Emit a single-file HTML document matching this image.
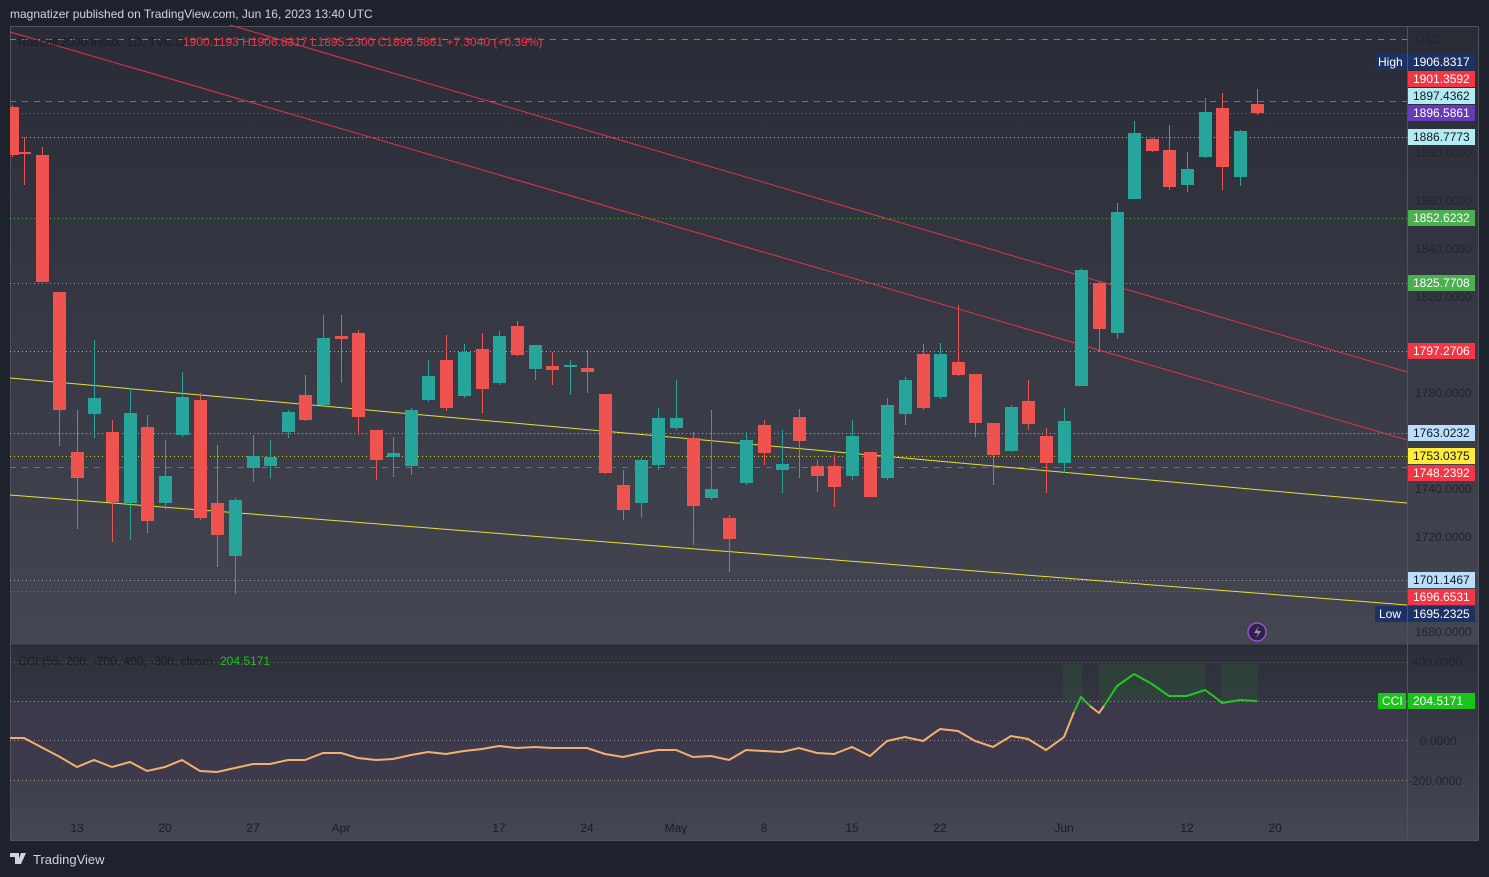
<!DOCTYPE html>
<html><head><meta charset="utf-8"><style>
body{margin:0;width:1489px;height:877px;background:#1e222d;overflow:hidden;font-family:"Liberation Sans",sans-serif}
.t{position:absolute;left:10px;top:7px;color:#d1d4dc;font-size:12px}
</style></head><body>
<div class="t">magnatizer published on TradingView.com, Jun 16, 2023 13:40 UTC</div>
<svg width="1489" height="877" style="position:absolute;left:0;top:0" xmlns="http://www.w3.org/2000/svg" font-family="Liberation Sans, sans-serif">
<defs>
<linearGradient id="g" x1="0" y1="0" x2="0" y2="1"><stop offset="0" stop-color="#292c36"/><stop offset="1" stop-color="#444652"/></linearGradient>
<linearGradient id="g2" x1="0" y1="0" x2="0" y2="1"><stop offset="0" stop-color="#2c2f3a"/><stop offset="1" stop-color="#454752"/></linearGradient>
<clipPath id="cp"><rect x="10" y="26" width="1397" height="619"/></clipPath>
</defs>
<rect x="10" y="26" width="1469" height="619" fill="url(#g)"/>
<rect x="10" y="646" width="1469" height="195" fill="url(#g2)"/>
<rect x="10" y="701" width="1397" height="79" fill="#3f3a4d" opacity="0.8"/>
<line x1="10" y1="645.5" x2="1479" y2="645.5" stroke="#2a2d37" stroke-width="2"/>
<line x1="1407.5" y1="26" x2="1407.5" y2="841" stroke="#50535e"/>
<rect x="10.5" y="26.5" width="1468" height="814" fill="none" stroke="#50535e"/>
<g stroke-width="1">
<line x1="10" y1="39.5" x2="1407" y2="39.5" stroke="#6b8a6e" stroke-dasharray="6,6"/>
<line x1="10" y1="101.5" x2="1407" y2="101.5" stroke="#f23645" stroke-dasharray="6,6"/>
<line x1="10" y1="113.5" x2="1407" y2="113.5" stroke="#7e57c2" stroke-dasharray="1,3"/>
<line x1="10" y1="137.5" x2="1407" y2="137.5" stroke="#a0c8c8" stroke-dasharray="1,3"/>
<line x1="10" y1="218.5" x2="1407" y2="218.5" stroke="#4caf50" stroke-dasharray="1,3"/>
<line x1="10" y1="283.5" x2="1407" y2="283.5" stroke="#8a9" stroke-dasharray="1,3"/>
<line x1="10" y1="351.5" x2="1407" y2="351.5" stroke="#aaa" stroke-dasharray="1,3"/>
<line x1="10" y1="433.5" x2="1407" y2="433.5" stroke="#aab" stroke-dasharray="1,3"/>
<line x1="10" y1="456.5" x2="1407" y2="456.5" stroke="#d4c23a" stroke-dasharray="1,3"/>
<line x1="10" y1="467.5" x2="1407" y2="467.5" stroke="#f23645" stroke-dasharray="6,6"/>
<line x1="10" y1="580.5" x2="1407" y2="580.5" stroke="#aab" stroke-dasharray="1,3"/>
<line x1="10" y1="591.5" x2="1407" y2="591.5" stroke="#c44" stroke-dasharray="1,3"/>
<line x1="10" y1="662.5" x2="1407" y2="662.5" stroke="#666" stroke-dasharray="1,3"/>
<line x1="10" y1="701.5" x2="1407" y2="701.5" stroke="#999" stroke-dasharray="1,3"/>
<line x1="10" y1="740.5" x2="1407" y2="740.5" stroke="#999" stroke-dasharray="1,3"/>
<line x1="10" y1="780.5" x2="1407" y2="780.5" stroke="#999" stroke-dasharray="1,3"/>
</g>
<line x1="10" y1="32" x2="1407" y2="440" stroke="#e03545" stroke-width="1"/>
<line x1="230" y1="25" x2="1407" y2="372" stroke="#e03545" stroke-width="1"/>
<line x1="10" y1="378" x2="1407" y2="503" stroke="#e8e030" stroke-width="1"/>
<line x1="10" y1="495" x2="1407" y2="605" stroke="#e8e030" stroke-width="1"/>
<g id="candles" clip-path="url(#cp)"></g>
<text x="18" y="46" font-size="12" fill="#1a1d26">Russell 2000 Index, 1D, TVC  O</text>
<text x="183" y="46" font-size="12" fill="#f23645">1900.1193  H1906.8317  L1895.2300  C1896.5861  +7.3040 (+0.39%)</text>
<text x="18" y="665" font-size="12" fill="#1a1d26">CCI (55, 200, -200, 400, -300, close)</text>
<text x="220" y="665" font-size="12" fill="#1bc41b">204.5171</text>
<rect x="1063" y="664" width="19" height="37" fill="#2f4a3a" opacity="0.6"/>
<rect x="1099" y="664" width="106" height="37" fill="#2f4a3a" opacity="0.6"/>
<rect x="1221" y="664" width="37" height="37" fill="#2f4a3a" opacity="0.6"/>
<polyline fill="none" stroke="#f5b06e" stroke-width="2" points="10,738 24,738 60,757 77,767 94,760 112,767 130,762 147,771 165,767 182,760 200,771 217,772 235,768 253,764 270,764 288,760 305,760 323,753 341,753 358,758 376,760 393,759 411,755 428,752 446,754 464,751 482,749 499,746 517,748 535,747 552,748 570,748 587,748 605,754 623,757 641,753 658,750 676,750 693,757 711,756 729,760 746,750 764,751 782,752 799,748 817,753 834,754 852,747 870,756 887,741 905,737 923,741 940,729 958,731 975,741 993,747 1011,736 1028,739 1046,750 1064,737 1074,712"/>
<polyline fill="none" stroke="#f5b06e" stroke-width="2" points="1090,706 1099,713 1104,706"/>
<polyline fill="none" stroke="#22c722" stroke-width="2" points="1074,712 1081,697 1090,706"/>
<polyline fill="none" stroke="#22c722" stroke-width="2" points="1104,706 1117,686 1134,674 1152,684 1169,696 1187,696 1205,690 1220,701 1222,703 1240,700 1257,701"/>
<g font-size="12" fill="#22252e">
<text x="1416" y="44">USD</text>
<text x="1415" y="157">1880.0000</text>
<text x="1415" y="205">1860.0000</text>
<text x="1415" y="253">1840.0000</text>
<text x="1415" y="301">1820.0000</text>
<text x="1415" y="397">1780.0000</text>
<text x="1415" y="493">1740.0000</text>
<text x="1415" y="541">1720.0000</text>
<text x="1415" y="636">1680.0000</text>
<text x="1412" y="666">400.0000</text>
<text x="1420" y="745">0.0000</text>
<text x="1408" y="785">-200.0000</text>
</g>
<g font-size="12">
<rect x="1375" y="54" width="32" height="16" fill="#1c3264"/><text x="1378" y="66" fill="#fff">High</text>
<rect x="1408" y="54" width="67" height="16" fill="#1c3264"/><text x="1413" y="66" fill="#fff">1906.8317</text>
<rect x="1408" y="71" width="67" height="16" fill="#f23645"/><text x="1413" y="83" fill="#fff">1901.3592</text>
<rect x="1408" y="88" width="67" height="16" fill="#b2ebf2"/><text x="1413" y="100" fill="#131722">1897.4362</text>
<rect x="1408" y="105" width="67" height="16" fill="#673ab7"/><text x="1413" y="117" fill="#fff">1896.5861</text>
<rect x="1408" y="129" width="67" height="16" fill="#b2ebf2"/><text x="1413" y="141" fill="#131722">1886.7773</text>
<rect x="1408" y="210" width="67" height="16" fill="#4caf50"/><text x="1413" y="222" fill="#fff">1852.6232</text>
<rect x="1408" y="275" width="67" height="16" fill="#4caf50"/><text x="1413" y="287" fill="#fff">1825.7708</text>
<rect x="1408" y="343" width="67" height="16" fill="#f23645"/><text x="1413" y="355" fill="#fff">1797.2706</text>
<rect x="1408" y="425" width="67" height="16" fill="#bbdefb"/><text x="1413" y="437" fill="#131722">1763.0232</text>
<rect x="1408" y="448" width="67" height="16" fill="#ffeb3b"/><text x="1413" y="460" fill="#131722">1753.0375</text>
<rect x="1408" y="465" width="67" height="16" fill="#f23645"/><text x="1413" y="477" fill="#fff">1748.2392</text>
<rect x="1408" y="572" width="67" height="16" fill="#bbdefb"/><text x="1413" y="584" fill="#131722">1701.1467</text>
<rect x="1408" y="589" width="67" height="16" fill="#f23645"/><text x="1413" y="601" fill="#fff">1696.6531</text>
<rect x="1375" y="606" width="32" height="16" fill="#1c3264"/><text x="1379" y="618" fill="#fff">Low</text>
<rect x="1408" y="606" width="67" height="16" fill="#1c3264"/><text x="1413" y="618" fill="#fff">1695.2325</text>
<rect x="1378" y="693" width="28" height="16" fill="#1bc41b"/><text x="1382" y="705" fill="#fff">CCI</text>
<rect x="1408" y="693" width="67" height="16" fill="#1bc41b"/><text x="1413" y="705" fill="#fff">204.5171</text>
</g>
<circle cx="1257" cy="632" r="9" fill="#2a2540" stroke="#9c4fd9" stroke-width="1.5"/>
<path d="M1259 626 L1254 633 L1258 633 L1256 638 L1261 631 L1257 631 Z" fill="#c07cf0"/>
<g font-size="12" fill="#1a1d26" text-anchor="middle">
<text x="77" y="832">13</text><text x="165" y="832">20</text><text x="253" y="832">27</text><text x="341" y="832">Apr</text>
<text x="499" y="832">17</text><text x="587" y="832">24</text><text x="676" y="832">May</text><text x="764" y="832">8</text>
<text x="852" y="832">15</text><text x="940" y="832">22</text><text x="1064" y="832">Jun</text><text x="1187" y="832">12</text><text x="1275" y="832">20</text>
</g>
<path d="M10 853 h9 v11 h-4 v-7 h-5z M21 853 h5 l-5 11 h-4z" fill="#d1d4dc"/>
<text x="33" y="864" font-size="13" fill="#d1d4dc">TradingView</text>
</svg>
<script>
var c=[[12,107,155,105,157,0],[24,152,154,137,185,0],[42,155,282,147,282,0],[59,292,410,292,446,0],[77,452,478,410,529,0],[94,414,398,340,438,1],[112,432,502,420,542,0],[130,503,413,388,540,1],[147,427,521,415,533,0],[165,503,476,440,510,1],[182,435,397,372,437,1],[200,400,518,393,520,0],[217,503,535,445,567,0],[235,556,500,498,594,1],[253,468,456,435,482,1],[270,466,457,440,478,1],[288,432,412,410,438,1],[305,395,420,375,421,0],[323,405,338,315,406,1],[341,336,339,315,383,0],[358,333,417,330,435,0],[376,430,460,430,480,0],[393,457,453,437,477,1],[411,466,410,408,475,1],[428,400,376,360,402,1],[446,360,408,335,411,0],[464,396,352,344,398,1],[482,349,389,333,413,0],[499,383,336,331,385,1],[517,326,355,321,356,0],[535,369,345,345,380,1],[552,366,370,352,385,0],[570,367,365,360,395,1],[587,368,372,350,393,0],[605,394,473,394,474,0],[623,485,510,470,520,0],[641,503,460,458,518,1],[658,465,418,408,470,1],[676,428,418,380,430,1],[693,438,506,432,545,0],[711,498,489,410,500,1],[729,518,539,515,572,0],[746,483,440,432,485,1],[764,425,453,420,465,0],[782,470,464,430,493,1],[799,417,441,409,478,0],[817,466,476,460,492,0],[834,466,487,455,507,0],[852,476,436,420,480,1],[870,452,497,452,497,0],[887,478,405,398,480,1],[905,414,380,377,425,1],[923,354,408,344,410,0],[940,397,354,343,399,1],[958,362,375,305,376,0],[975,374,423,374,437,0],[993,423,455,423,485,0],[1011,451,407,405,452,1],[1028,401,424,380,430,0],[1046,436,463,428,493,0],[1064,463,421,408,473,1],[1081,386,270,268,386,1],[1099,283,329,281,352,0],[1117,333,212,203,339,1],[1134,199,133,121,199,1],[1152,139,151,138,152,0],[1169,150,187,125,190,0],[1187,185,169,152,192,1],[1205,157,112,98,158,1],[1222,108,167,93,190,0],[1240,177,131,130,186,1],[1257,104,113,89,115,0]];
var g=document.getElementById('candles'),s='';
c.forEach(function(d){var col=d[5]?'#26a69a':'#ef5350';var t=Math.min(d[1],d[2]),h=Math.max(2,Math.abs(d[2]-d[1]));
s+='<line x1="'+(d[0]+.5)+'" y1="'+d[3]+'" x2="'+(d[0]+.5)+'" y2="'+d[4]+'" stroke="'+col+'"/><rect x="'+(d[0]-6)+'" y="'+t+'" width="13" height="'+h+'" fill="'+col+'"/>';});
g.innerHTML=s;
</script>
</body></html>
